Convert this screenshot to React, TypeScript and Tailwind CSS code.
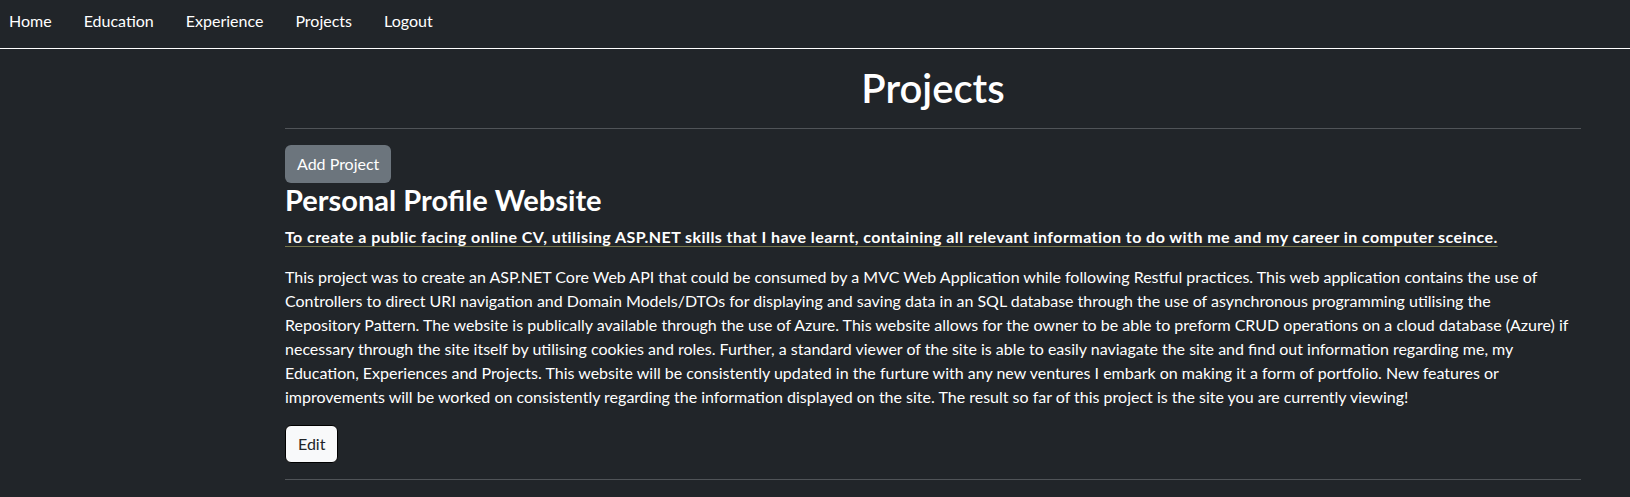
const lines = [
  "This project was to create an ASP.NET Core Web API that could be consumed by a MVC Web Application while following Restful practices. This web application contains the use of",
  "Controllers to direct URI navigation and Domain Models/DTOs for displaying and saving data in an SQL database through the use of asynchronous programming utilising the",
  "Repository Pattern. The website is publically available through the use of Azure. This website allows for the owner to be able to preform CRUD operations on a cloud database (Azure) if",
  "necessary through the site itself by utilising cookies and roles. Further, a standard viewer of the site is able to easily naviagate the site and find out information regarding me, my",
  "Education, Experiences and Projects. This website will be consistently updated in the furture with any new ventures I embark on making it a form of portfolio. New features or",
  "improvements will be worked on consistently regarding the information displayed on the site. The result so far of this project is the site you are currently viewing!",
];

const navItems = ["Home", "Education", "Experience", "Projects", "Logout"];

export default function App() {
  return (
    <div className="min-h-screen bg-[#212529] text-white font-['Lato',_'Liberation_Sans',_sans-serif]">
      <nav className="h-[49px] border-b border-white flex items-start pt-[9px] pl-[9px] gap-8">
        {navItems.map((n) => (
          <a key={n} href="#" className="text-base leading-6 text-white">
            {n}
          </a>
        ))}
      </nav>
      <main className="ml-[285px] w-[1296px] pt-[15px]">
        <h1 className="text-center text-[40px] leading-[48px] font-semibold">Projects</h1>
        <hr className="my-4 border-t border-[#505458]" />
        <button className="h-[38px] px-3 rounded-md bg-[#6c757d] text-white text-base leading-6">
          Add Project
        </button>
        <h2 className="text-[29px] leading-[34px] font-bold mb-2">Personal Profile Website</h2>
        <p className="text-base leading-6 font-bold tracking-[0.43px] underline decoration-[#76764c] underline-offset-[3px] mb-4 whitespace-nowrap">
          To create a public facing online CV, utilising ASP.NET skills that I have learnt, containing all relevant information to do with me and my career in computer sceince.
        </p>
        <p className="text-base leading-6 text-white mb-4">
          {lines.map((l) => (
            <span key={l} className="block whitespace-nowrap">
              {l}
            </span>
          ))}
        </p>
        <button className="h-[38px] px-3 rounded-md bg-[#f8f9fa] border border-black text-[#212529] text-base leading-6">
          Edit
        </button>
        <hr className="my-4 border-t border-[#505458]" />
      </main>
    </div>
  );
}
